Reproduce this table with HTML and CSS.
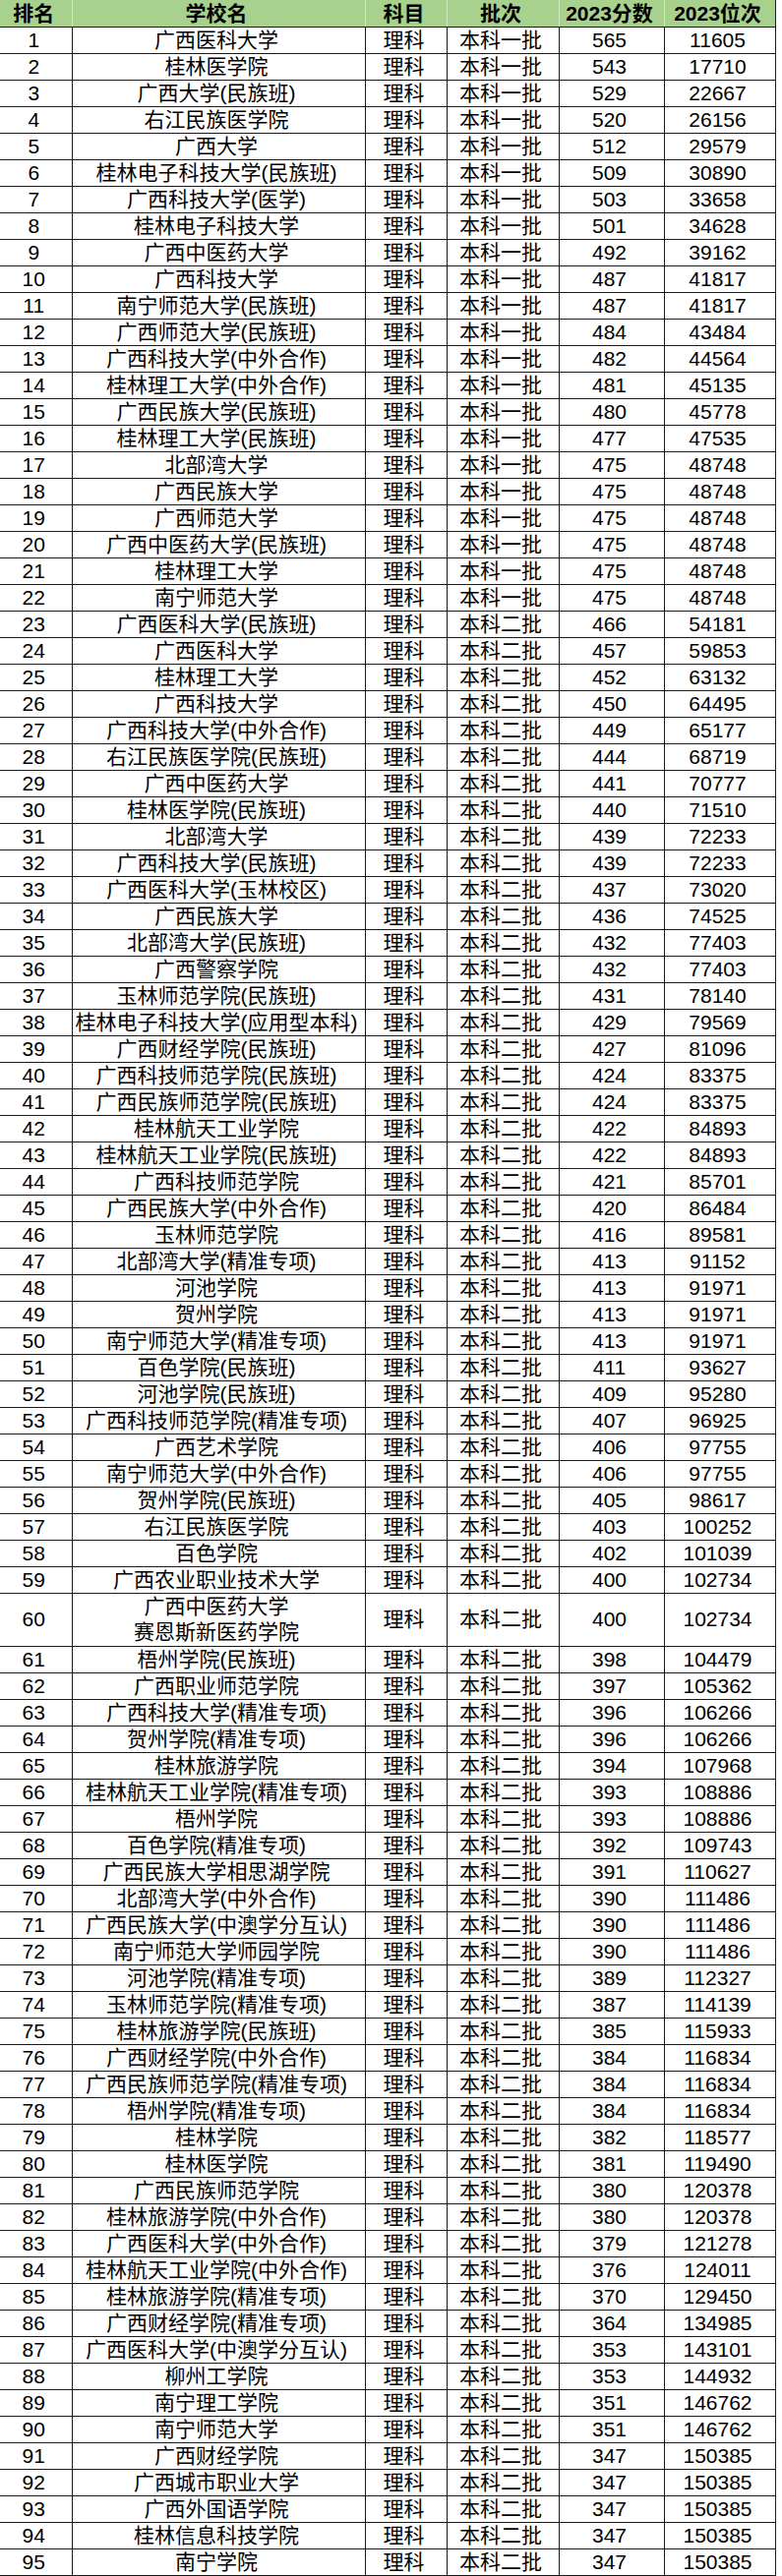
FILE: index.html
```html
<!DOCTYPE html>
<html lang="zh-CN">
<head>
<meta charset="utf-8">
<title>2023 广西 理科 院校排名</title>
<link rel="stylesheet" href="styles.css">
</head>
<body>
<table class="rank">
<colgroup>
<col class="c-rank"><col class="c-name"><col class="c-sub"><col class="c-batch"><col class="c-score"><col class="c-pos">
</colgroup>
<thead>
<tr><th>排名</th><th>学校名</th><th>科目</th><th>批次</th><th>2023分数</th><th>2023位次</th></tr>
</thead>
<tbody id="rows">
<tr><td>1</td><td>广西医科大学</td><td>理科</td><td>本科一批</td><td>565</td><td>11605</td></tr>
<tr><td>2</td><td>桂林医学院</td><td>理科</td><td>本科一批</td><td>543</td><td>17710</td></tr>
<tr><td>3</td><td>广西大学(民族班)</td><td>理科</td><td>本科一批</td><td>529</td><td>22667</td></tr>
<tr><td>4</td><td>右江民族医学院</td><td>理科</td><td>本科一批</td><td>520</td><td>26156</td></tr>
<tr><td>5</td><td>广西大学</td><td>理科</td><td>本科一批</td><td>512</td><td>29579</td></tr>
<tr><td>6</td><td>桂林电子科技大学(民族班)</td><td>理科</td><td>本科一批</td><td>509</td><td>30890</td></tr>
<tr><td>7</td><td>广西科技大学(医学)</td><td>理科</td><td>本科一批</td><td>503</td><td>33658</td></tr>
<tr><td>8</td><td>桂林电子科技大学</td><td>理科</td><td>本科一批</td><td>501</td><td>34628</td></tr>
<tr><td>9</td><td>广西中医药大学</td><td>理科</td><td>本科一批</td><td>492</td><td>39162</td></tr>
<tr><td>10</td><td>广西科技大学</td><td>理科</td><td>本科一批</td><td>487</td><td>41817</td></tr>
<tr><td>11</td><td>南宁师范大学(民族班)</td><td>理科</td><td>本科一批</td><td>487</td><td>41817</td></tr>
<tr><td>12</td><td>广西师范大学(民族班)</td><td>理科</td><td>本科一批</td><td>484</td><td>43484</td></tr>
<tr><td>13</td><td>广西科技大学(中外合作)</td><td>理科</td><td>本科一批</td><td>482</td><td>44564</td></tr>
<tr><td>14</td><td>桂林理工大学(中外合作)</td><td>理科</td><td>本科一批</td><td>481</td><td>45135</td></tr>
<tr><td>15</td><td>广西民族大学(民族班)</td><td>理科</td><td>本科一批</td><td>480</td><td>45778</td></tr>
<tr><td>16</td><td>桂林理工大学(民族班)</td><td>理科</td><td>本科一批</td><td>477</td><td>47535</td></tr>
<tr><td>17</td><td>北部湾大学</td><td>理科</td><td>本科一批</td><td>475</td><td>48748</td></tr>
<tr><td>18</td><td>广西民族大学</td><td>理科</td><td>本科一批</td><td>475</td><td>48748</td></tr>
<tr><td>19</td><td>广西师范大学</td><td>理科</td><td>本科一批</td><td>475</td><td>48748</td></tr>
<tr><td>20</td><td>广西中医药大学(民族班)</td><td>理科</td><td>本科一批</td><td>475</td><td>48748</td></tr>
<tr><td>21</td><td>桂林理工大学</td><td>理科</td><td>本科一批</td><td>475</td><td>48748</td></tr>
<tr><td>22</td><td>南宁师范大学</td><td>理科</td><td>本科一批</td><td>475</td><td>48748</td></tr>
<tr><td>23</td><td>广西医科大学(民族班)</td><td>理科</td><td>本科二批</td><td>466</td><td>54181</td></tr>
<tr><td>24</td><td>广西医科大学</td><td>理科</td><td>本科二批</td><td>457</td><td>59853</td></tr>
<tr><td>25</td><td>桂林理工大学</td><td>理科</td><td>本科二批</td><td>452</td><td>63132</td></tr>
<tr><td>26</td><td>广西科技大学</td><td>理科</td><td>本科二批</td><td>450</td><td>64495</td></tr>
<tr><td>27</td><td>广西科技大学(中外合作)</td><td>理科</td><td>本科二批</td><td>449</td><td>65177</td></tr>
<tr><td>28</td><td>右江民族医学院(民族班)</td><td>理科</td><td>本科二批</td><td>444</td><td>68719</td></tr>
<tr><td>29</td><td>广西中医药大学</td><td>理科</td><td>本科二批</td><td>441</td><td>70777</td></tr>
<tr><td>30</td><td>桂林医学院(民族班)</td><td>理科</td><td>本科二批</td><td>440</td><td>71510</td></tr>
<tr><td>31</td><td>北部湾大学</td><td>理科</td><td>本科二批</td><td>439</td><td>72233</td></tr>
<tr><td>32</td><td>广西科技大学(民族班)</td><td>理科</td><td>本科二批</td><td>439</td><td>72233</td></tr>
<tr><td>33</td><td>广西医科大学(玉林校区)</td><td>理科</td><td>本科二批</td><td>437</td><td>73020</td></tr>
<tr><td>34</td><td>广西民族大学</td><td>理科</td><td>本科二批</td><td>436</td><td>74525</td></tr>
<tr><td>35</td><td>北部湾大学(民族班)</td><td>理科</td><td>本科二批</td><td>432</td><td>77403</td></tr>
<tr><td>36</td><td>广西警察学院</td><td>理科</td><td>本科二批</td><td>432</td><td>77403</td></tr>
<tr><td>37</td><td>玉林师范学院(民族班)</td><td>理科</td><td>本科二批</td><td>431</td><td>78140</td></tr>
<tr><td>38</td><td>桂林电子科技大学(应用型本科)</td><td>理科</td><td>本科二批</td><td>429</td><td>79569</td></tr>
<tr><td>39</td><td>广西财经学院(民族班)</td><td>理科</td><td>本科二批</td><td>427</td><td>81096</td></tr>
<tr><td>40</td><td>广西科技师范学院(民族班)</td><td>理科</td><td>本科二批</td><td>424</td><td>83375</td></tr>
<tr><td>41</td><td>广西民族师范学院(民族班)</td><td>理科</td><td>本科二批</td><td>424</td><td>83375</td></tr>
<tr><td>42</td><td>桂林航天工业学院</td><td>理科</td><td>本科二批</td><td>422</td><td>84893</td></tr>
<tr><td>43</td><td>桂林航天工业学院(民族班)</td><td>理科</td><td>本科二批</td><td>422</td><td>84893</td></tr>
<tr><td>44</td><td>广西科技师范学院</td><td>理科</td><td>本科二批</td><td>421</td><td>85701</td></tr>
<tr><td>45</td><td>广西民族大学(中外合作)</td><td>理科</td><td>本科二批</td><td>420</td><td>86484</td></tr>
<tr><td>46</td><td>玉林师范学院</td><td>理科</td><td>本科二批</td><td>416</td><td>89581</td></tr>
<tr><td>47</td><td>北部湾大学(精准专项)</td><td>理科</td><td>本科二批</td><td>413</td><td>91152</td></tr>
<tr><td>48</td><td>河池学院</td><td>理科</td><td>本科二批</td><td>413</td><td>91971</td></tr>
<tr><td>49</td><td>贺州学院</td><td>理科</td><td>本科二批</td><td>413</td><td>91971</td></tr>
<tr><td>50</td><td>南宁师范大学(精准专项)</td><td>理科</td><td>本科二批</td><td>413</td><td>91971</td></tr>
<tr><td>51</td><td>百色学院(民族班)</td><td>理科</td><td>本科二批</td><td>411</td><td>93627</td></tr>
<tr><td>52</td><td>河池学院(民族班)</td><td>理科</td><td>本科二批</td><td>409</td><td>95280</td></tr>
<tr><td>53</td><td>广西科技师范学院(精准专项)</td><td>理科</td><td>本科二批</td><td>407</td><td>96925</td></tr>
<tr><td>54</td><td>广西艺术学院</td><td>理科</td><td>本科二批</td><td>406</td><td>97755</td></tr>
<tr><td>55</td><td>南宁师范大学(中外合作)</td><td>理科</td><td>本科二批</td><td>406</td><td>97755</td></tr>
<tr><td>56</td><td>贺州学院(民族班)</td><td>理科</td><td>本科二批</td><td>405</td><td>98617</td></tr>
<tr><td>57</td><td>右江民族医学院</td><td>理科</td><td>本科二批</td><td>403</td><td>100252</td></tr>
<tr><td>58</td><td>百色学院</td><td>理科</td><td>本科二批</td><td>402</td><td>101039</td></tr>
<tr><td>59</td><td>广西农业职业技术大学</td><td>理科</td><td>本科二批</td><td>400</td><td>102734</td></tr>
<tr class="tall"><td>60</td><td>广西中医药大学<br>赛恩斯新医药学院</td><td>理科</td><td>本科二批</td><td>400</td><td>102734</td></tr>
<tr><td>61</td><td>梧州学院(民族班)</td><td>理科</td><td>本科二批</td><td>398</td><td>104479</td></tr>
<tr><td>62</td><td>广西职业师范学院</td><td>理科</td><td>本科二批</td><td>397</td><td>105362</td></tr>
<tr><td>63</td><td>广西科技大学(精准专项)</td><td>理科</td><td>本科二批</td><td>396</td><td>106266</td></tr>
<tr><td>64</td><td>贺州学院(精准专项)</td><td>理科</td><td>本科二批</td><td>396</td><td>106266</td></tr>
<tr><td>65</td><td>桂林旅游学院</td><td>理科</td><td>本科二批</td><td>394</td><td>107968</td></tr>
<tr><td>66</td><td>桂林航天工业学院(精准专项)</td><td>理科</td><td>本科二批</td><td>393</td><td>108886</td></tr>
<tr><td>67</td><td>梧州学院</td><td>理科</td><td>本科二批</td><td>393</td><td>108886</td></tr>
<tr><td>68</td><td>百色学院(精准专项)</td><td>理科</td><td>本科二批</td><td>392</td><td>109743</td></tr>
<tr><td>69</td><td>广西民族大学相思湖学院</td><td>理科</td><td>本科二批</td><td>391</td><td>110627</td></tr>
<tr><td>70</td><td>北部湾大学(中外合作)</td><td>理科</td><td>本科二批</td><td>390</td><td>111486</td></tr>
<tr><td>71</td><td>广西民族大学(中澳学分互认)</td><td>理科</td><td>本科二批</td><td>390</td><td>111486</td></tr>
<tr><td>72</td><td>南宁师范大学师园学院</td><td>理科</td><td>本科二批</td><td>390</td><td>111486</td></tr>
<tr><td>73</td><td>河池学院(精准专项)</td><td>理科</td><td>本科二批</td><td>389</td><td>112327</td></tr>
<tr><td>74</td><td>玉林师范学院(精准专项)</td><td>理科</td><td>本科二批</td><td>387</td><td>114139</td></tr>
<tr><td>75</td><td>桂林旅游学院(民族班)</td><td>理科</td><td>本科二批</td><td>385</td><td>115933</td></tr>
<tr><td>76</td><td>广西财经学院(中外合作)</td><td>理科</td><td>本科二批</td><td>384</td><td>116834</td></tr>
<tr><td>77</td><td>广西民族师范学院(精准专项)</td><td>理科</td><td>本科二批</td><td>384</td><td>116834</td></tr>
<tr><td>78</td><td>梧州学院(精准专项)</td><td>理科</td><td>本科二批</td><td>384</td><td>116834</td></tr>
<tr><td>79</td><td>桂林学院</td><td>理科</td><td>本科二批</td><td>382</td><td>118577</td></tr>
<tr><td>80</td><td>桂林医学院</td><td>理科</td><td>本科二批</td><td>381</td><td>119490</td></tr>
<tr><td>81</td><td>广西民族师范学院</td><td>理科</td><td>本科二批</td><td>380</td><td>120378</td></tr>
<tr><td>82</td><td>桂林旅游学院(中外合作)</td><td>理科</td><td>本科二批</td><td>380</td><td>120378</td></tr>
<tr><td>83</td><td>广西医科大学(中外合作)</td><td>理科</td><td>本科二批</td><td>379</td><td>121278</td></tr>
<tr><td>84</td><td>桂林航天工业学院(中外合作)</td><td>理科</td><td>本科二批</td><td>376</td><td>124011</td></tr>
<tr><td>85</td><td>桂林旅游学院(精准专项)</td><td>理科</td><td>本科二批</td><td>370</td><td>129450</td></tr>
<tr><td>86</td><td>广西财经学院(精准专项)</td><td>理科</td><td>本科二批</td><td>364</td><td>134985</td></tr>
<tr><td>87</td><td>广西医科大学(中澳学分互认)</td><td>理科</td><td>本科二批</td><td>353</td><td>143101</td></tr>
<tr><td>88</td><td>柳州工学院</td><td>理科</td><td>本科二批</td><td>353</td><td>144932</td></tr>
<tr><td>89</td><td>南宁理工学院</td><td>理科</td><td>本科二批</td><td>351</td><td>146762</td></tr>
<tr><td>90</td><td>南宁师范大学</td><td>理科</td><td>本科二批</td><td>351</td><td>146762</td></tr>
<tr><td>91</td><td>广西财经学院</td><td>理科</td><td>本科二批</td><td>347</td><td>150385</td></tr>
<tr><td>92</td><td>广西城市职业大学</td><td>理科</td><td>本科二批</td><td>347</td><td>150385</td></tr>
<tr><td>93</td><td>广西外国语学院</td><td>理科</td><td>本科二批</td><td>347</td><td>150385</td></tr>
<tr><td>94</td><td>桂林信息科技学院</td><td>理科</td><td>本科二批</td><td>347</td><td>150385</td></tr>
<tr><td>95</td><td>南宁学院</td><td>理科</td><td>本科二批</td><td>347</td><td>150385</td></tr>
</tbody>
</table>
</body>
</html>
```

FILE: styles.css
```css
html, body {
  margin: 0;
  padding: 0;
  background: #ffffff;
}

body {
  font-family: "Liberation Sans", Arial, "Noto Sans CJK SC", sans-serif;
  color: #000000;
}

.rank {
  border-collapse: collapse;
  table-layout: fixed;
  width: 788px;
  font-size: 21px;
  line-height: 1;
}

.c-rank { width: 73px; }
.c-name { width: 298px; }
.c-sub { width: 83px; }
.c-batch { width: 114px; }
.c-score { width: 107px; }
.c-pos { width: 113px; }

.rank th,
.rank td {
  padding: 0 4px 0 0;
  text-align: center;
  vertical-align: middle;
  white-space: nowrap;
  overflow: hidden;
}

.rank thead tr {
  height: 27px;
}

.rank th {
  background: #a9d18e;
  font-weight: bold;
  border-left: 1px solid #d3e9c4;
  border-right: 1px solid #d3e9c4;
  border-bottom: 1px solid #1a1a1a;
}

.rank th:first-child,
.rank td:first-child {
  border-left: none;
}

.rank th:last-child {
  border-right: 1px solid #1a1a1a;
}

.rank tbody tr {
  height: 27px;
}

.rank tbody tr.tall {
  height: 54px;
}

.rank td {
  border: 1px solid #1a1a1a;
  line-height: 26px;
}

.rank tr.tall td {
  line-height: 26px;
}
```
